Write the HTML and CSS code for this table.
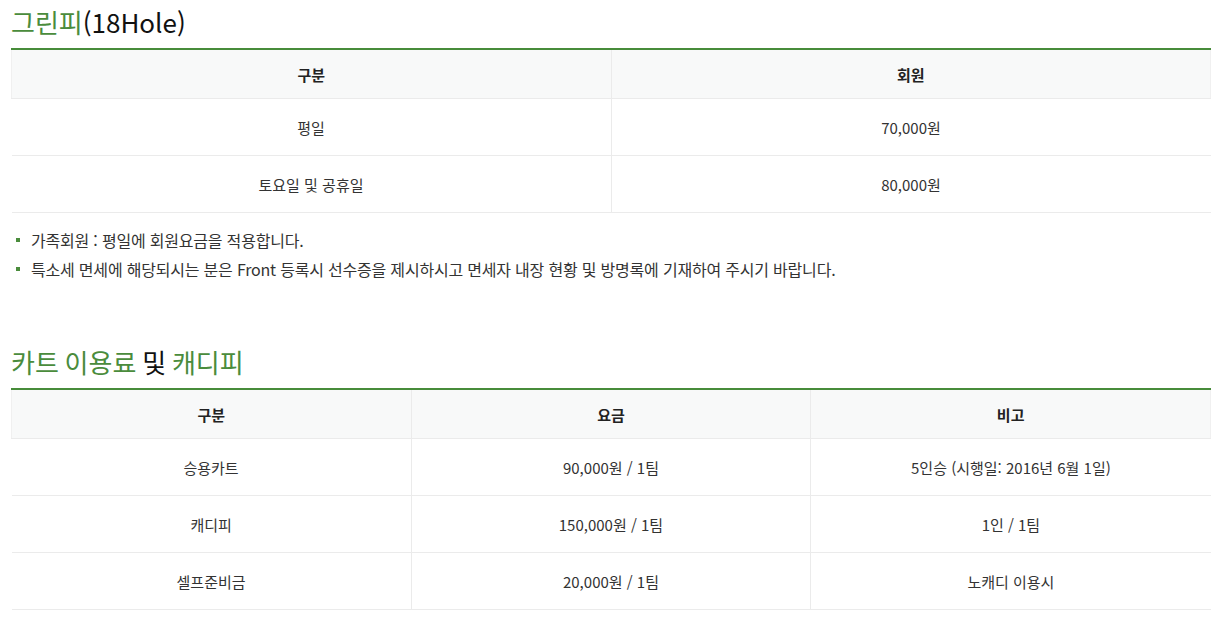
FILE: index.html
```html
<!DOCTYPE html>
<html lang="ko">
<head>
<meta charset="utf-8">
<link rel="stylesheet" href="styles.css">
</head>
<body>
<div class="page">
  <section class="section">
    <h3 class="title"><span class="green">그린피</span>(18Hole)</h3>
    <table class="fee two">
      <thead>
        <tr><th>구분</th><th>회원</th></tr>
      </thead>
      <tbody>
        <tr><td>평일</td><td>70,000원</td></tr>
        <tr><td>토요일 및 공휴일</td><td>80,000원</td></tr>
      </tbody>
    </table>
    <ul class="notes">
      <li>가족회원 : 평일에 회원요금을 적용합니다.</li>
      <li>특소세 면세에 해당되시는 분은 Front 등록시 선수증을 제시하시고 면세자 내장 현황 및 방명록에 기재하여 주시기 바랍니다.</li>
    </ul>
  </section>
  <section class="section second">
    <h3 class="title"><span class="green">카트 이용료</span> 및 <span class="green">캐디피</span></h3>
    <table class="fee three">
      <thead>
        <tr><th>구분</th><th>요금</th><th>비고</th></tr>
      </thead>
      <tbody>
        <tr><td>승용카트</td><td>90,000원 / 1팀</td><td>5인승 (시행일: 2016년 6월 1일)</td></tr>
        <tr><td>캐디피</td><td>150,000원 / 1팀</td><td>1인 / 1팀</td></tr>
        <tr><td>셀프준비금</td><td>20,000원 / 1팀</td><td>노캐디 이용시</td></tr>
      </tbody>
    </table>
  </section>
</div>
</body>
</html>
```

FILE: styles.css
```css
html, body {
  margin: 0;
  padding: 0;
  background: #fff;
}
body {
  font-family: "Noto Sans CJK KR", "Noto Sans", sans-serif;
  color: #333;
}
.page {
  width: 1200px;
  padding: 0 11px;
}
.title {
  margin: 0;
  padding-top: 5px;
  height: 43px;
  font-size: 26px;
  font-weight: 400;
  line-height: 34px;
  color: #111;
}
.second .title {
  word-spacing: -1.5px;
}
.green {
  color: #4a8c3c;
}
.fee {
  width: 100%;
  border-collapse: collapse;
  border-top: 2px solid #478c3a;
  table-layout: fixed;
}
.fee th, .fee td {
  text-align: center;
  font-size: 15px;
  border-bottom: 1px solid #ebebeb;
  border-left: 1px solid #ebebeb;
  color: #333;
}
.fee th:first-child {
  border-left: 1px solid #f0f0f0;
}
.fee th:last-child {
  border-right: 1px solid #f0f0f0;
}
.fee tbody td:first-child {
  border-left: none;
}
.fee th {
  background: #f8f9f9;
  font-weight: 700;
  height: 48px;
  padding: 0;
  color: #222;
}
.fee td {
  height: 56px;
  padding: 0;
}
.notes {
  list-style: none;
  margin: 13px 0 0;
  padding: 0;
}
.notes li {
  position: relative;
  padding-left: 20px;
  font-size: 16px;
  letter-spacing: -0.2px;
  line-height: 29px;
  color: #333;
}
.notes li::before {
  content: "";
  position: absolute;
  left: 5px;
  top: 12px;
  width: 4px;
  height: 4px;
  background: #4a8c3c;
}
.second {
  margin-top: 56px;
}
```
